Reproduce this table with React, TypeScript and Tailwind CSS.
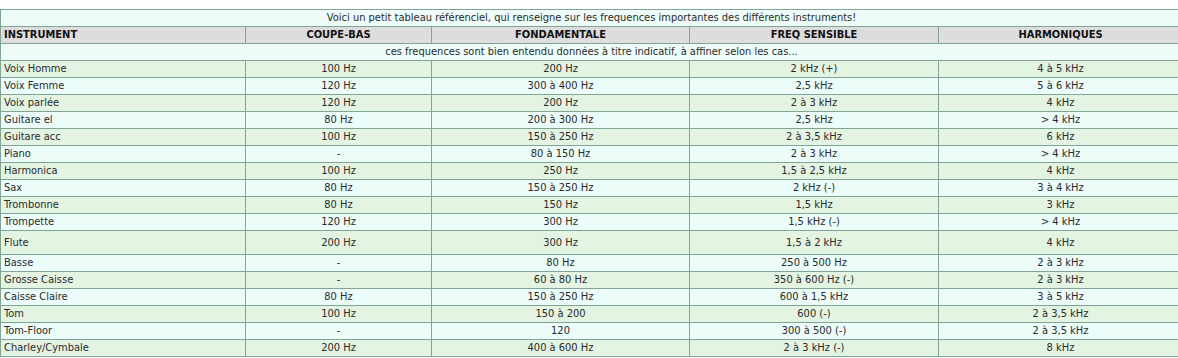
import React from "react";

const rows: [string, string, string, string, string][] = [
  ["Voix Homme", "100 Hz", "200 Hz", "2 kHz (+)", "4 à 5 kHz"],
  ["Voix Femme", "120 Hz", "300 à 400 Hz", "2,5 kHz", "5 à 6 kHz"],
  ["Voix parlée", "120 Hz", "200 Hz", "2 à 3 kHz", "4 kHz"],
  ["Guitare el", "80 Hz", "200 à 300 Hz", "2,5 kHz", "> 4 kHz"],
  ["Guitare acc", "100 Hz", "150 à 250 Hz", "2 à 3,5 kHz", "6 kHz"],
  ["Piano", "-", "80 à 150 Hz", "2 à 3 kHz", "> 4 kHz"],
  ["Harmonica", "100 Hz", "250 Hz", "1,5 à 2,5 kHz", "4 kHz"],
  ["Sax", "80 Hz", "150 à 250 Hz", "2 kHz (-)", "3 à 4 kHz"],
  ["Trombonne", "80 Hz", "150 Hz", "1,5 kHz", "3 kHz"],
  ["Trompette", "120 Hz", "300 Hz", "1,5 kHz (-)", "> 4 kHz"],
  ["Flute", "200 Hz", "300 Hz", "1,5 à 2 kHz", "4 kHz"],
  ["Basse", "-", "80 Hz", "250 à 500 Hz", "2 à 3 kHz"],
  ["Grosse Caisse", "-", "60 à 80 Hz", "350 à 600 Hz (-)", "2 à 3 kHz"],
  ["Caisse Claire", "80 Hz", "150 à 250 Hz", "600 à 1,5 kHz", "3 à 5 kHz"],
  ["Tom", "100 Hz", "150 à 200", "600 (-)", "2 à 3,5 kHz"],
  ["Tom-Floor", "-", "120", "300 à 500 (-)", "2 à 3,5 kHz"],
  ["Charley/Cymbale", "200 Hz", "400 à 600 Hz", "2 à 3 kHz (-)", "8 kHz"],
];

export default function App() {
  return (
    <div className="w-[1178px] h-[358px] overflow-hidden bg-white pt-[9px] pl-0">
      <table
        className="w-[1182px] border-collapse table-fixed text-[11px] text-[#2a2a2a] leading-[16px] font-stretch-condensed"
        style={{ fontFamily: '"DejaVu Sans Condensed", "DejaVu Sans", Verdana, sans-serif' }}
      >
        <colgroup>
          <col className="w-[245px]" />
          <col className="w-[186px]" />
          <col className="w-[258px]" />
          <col className="w-[249px]" />
          <col className="w-[244px]" />
        </colgroup>
        <tbody>
          <tr className="h-[17px] bg-[#eefdfa]">
            <td colSpan={5} className="border border-[#80a595] text-center p-0">
              Voici un petit tableau référenciel, qui renseigne sur les frequences importantes des différents instruments!
            </td>
          </tr>
          <tr className="h-[17px] bg-[#dddddd] font-bold text-[#111]">
            <td className="border border-[#80a595] text-left px-[3px] py-0">INSTRUMENT</td>
            <td className="border border-[#80a595] text-center p-0">COUPE-BAS</td>
            <td className="border border-[#80a595] text-center p-0">FONDAMENTALE</td>
            <td className="border border-[#80a595] text-center p-0">FREQ SENSIBLE</td>
            <td className="border border-[#80a595] text-center p-0">HARMONIQUES</td>
          </tr>
          <tr className="h-[17px] bg-[#eefdfa]">
            <td colSpan={5} className="border border-[#80a595] text-center p-0">
              ces frequences sont bien entendu données à titre indicatif, à affiner selon les cas...
            </td>
          </tr>
          {rows.map((r, i) => (
            <tr
              key={r[0]}
              className={`${i % 2 === 0 ? "bg-[#e3f4e3]" : "bg-[#ecfcf9]"} ${
                r[0] === "Flute" ? "h-[24px]" : "h-[17px]"
              }`}
            >
              <td className="border border-[#80a595] text-left px-[3px] py-0">{r[0]}</td>
              <td className="border border-[#80a595] text-center p-0">{r[1]}</td>
              <td className="border border-[#80a595] text-center p-0">{r[2]}</td>
              <td className="border border-[#80a595] text-center p-0">{r[3]}</td>
              <td className="border border-[#80a595] text-center p-0">{r[4]}</td>
            </tr>
          ))}
        </tbody>
      </table>
    </div>
  );
}
